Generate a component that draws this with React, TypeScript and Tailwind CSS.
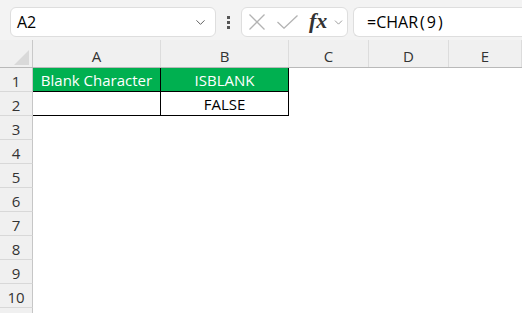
import { ChevronDown } from 'lucide-react'

const COLS = [
  { name: 'A', w: 'w-[128px]' },
  { name: 'B', w: 'w-[128px]' },
  { name: 'C', w: 'w-[80px]' },
  { name: 'D', w: 'w-[80px]' },
  { name: 'E', w: 'flex-1' },
]

const ROWS = [1, 2, 3, 4, 5, 6, 7, 8, 9, 10]

function cellClass(row: number, col: number) {
  if (row === 1 && col < 2) return 'bg-[#00b050] text-white border-r border-b border-black'
  if (row === 2 && col < 2) return 'bg-white text-black border-r border-b border-black'
  return 'bg-white'
}

function cellText(row: number, col: number) {
  if (row === 1 && col === 0) return 'Blank Character'
  if (row === 1 && col === 1) return 'ISBLANK'
  if (row === 2 && col === 1) return 'FALSE'
  return ''
}

export default function App() {
  return (
    <div className="w-[522px] h-[313px] overflow-hidden bg-white font-['Open_Sans',Arial,sans-serif] text-[#222]">
      {/* formula bar */}
      <div className="h-[40px] bg-[#f3f3f3] flex items-start pt-[7px] pl-[10px]">
        <div className="w-[206px] h-[30px] bg-white border border-[#dedede] rounded-[6px] flex items-center justify-between pl-[6px] pr-[7px]">
          <span className="text-[16px] text-black">A2</span>
          <ChevronDown size={15} strokeWidth={1.5} className="text-[#555]" />
        </div>
        <div className="w-[25px] h-[30px] flex flex-col items-center justify-center gap-[2px]">
          <span className="w-[3px] h-[3px] bg-[#555]" />
          <span className="w-[3px] h-[3px] bg-[#555]" />
          <span className="w-[3px] h-[3px] bg-[#555]" />
        </div>
        <div className="w-[107px] h-[30px] bg-white border border-[#dedede] rounded-[6px] flex items-center pl-[6px]">
          <svg width="18" height="16" viewBox="0 0 18 16" className="text-[#b3b3b3]">
            <path d="M1.5 0.5 L16.5 15.5 M16.5 0.5 L1.5 15.5" stroke="currentColor" strokeWidth="1.3" fill="none" />
          </svg>
          <svg width="21" height="14" viewBox="0 0 21 14" className="ml-[11px] text-[#b3b3b3]">
            <path d="M0.5 7 L7 13.2 L20.5 0.5" stroke="currentColor" strokeWidth="1.3" fill="none" />
          </svg>
          <span className="ml-[11px] font-['Liberation_Serif',serif] italic font-bold text-[22px] text-[#333] leading-none -mt-[2px]">fx</span>
          <ChevronDown size={13} strokeWidth={1.5} className="ml-[5px] text-[#888]" />
        </div>
        <div className="ml-[5px] flex-1 h-[30px] bg-white border border-r-0 border-[#dedede] rounded-l-[6px] flex items-center pl-[13px]">
          <span className="text-[16px] text-black">
            =CHAR<span className="mx-[2px]">(</span>9<span className="mx-[2px]">)</span>
          </span>
        </div>
      </div>

      {/* column headers */}
      <div className="h-[28px] flex bg-[#f0f0f0] border-b border-[#b9b9b9]">
        <div className="w-[33px] border-r border-[#c9c9c9] flex items-end justify-end pb-[2px] pr-[3px]">
          <div className="w-0 h-0 border-l-[15px] border-l-transparent border-b-[15px] border-b-[#d9d9d9]" />
        </div>
        {COLS.map((c) => (
          <div key={c.name} className={`${c.w} border-r border-[#dcdcdc] flex items-center justify-center pt-[6px] text-[15px] text-[#333]`}>
            {c.name}
          </div>
        ))}
      </div>

      {/* rows */}
      {ROWS.map((r) => (
        <div key={r} className="h-[24px] flex">
          <div className="w-[33px] bg-[#f0f0f0] border-r border-b border-r-[#c6c6c6] border-b-[#d8d8d8] flex items-center justify-center pt-[3px] text-[15px] text-[#333]">
            {r}
          </div>
          {COLS.map((c, i) => (
            <div key={c.name} className={`${c.w} ${cellClass(r, i)} flex items-center justify-center pt-[1px] text-[15px]`}>
              {cellText(r, i)}
            </div>
          ))}
        </div>
      ))}
      <div className="h-[24px] flex">
        <div className="w-[33px] bg-[#f0f0f0] border-r border-[#c6c6c6]" />
      </div>
    </div>
  )
}
